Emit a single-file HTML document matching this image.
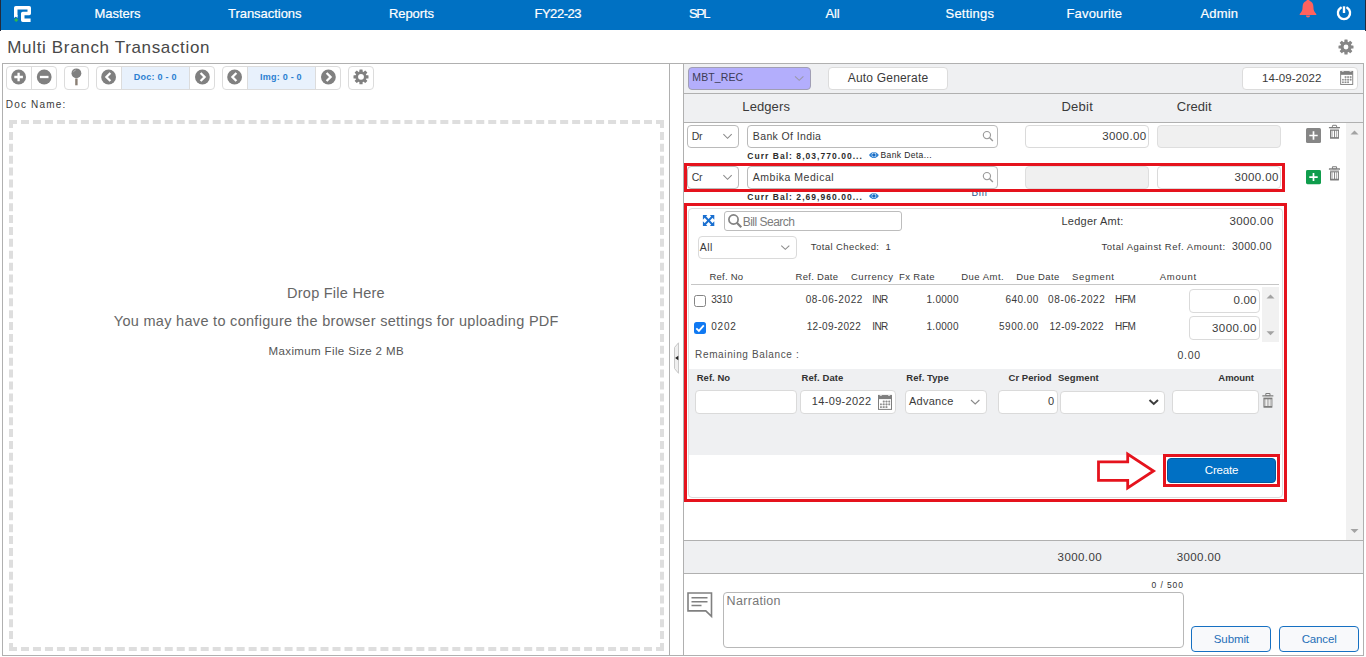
<!DOCTYPE html>
<html><head><meta charset="utf-8"><title>Multi Branch Transaction</title>
<style>
html,body{margin:0;padding:0;background:#fff;}
body{width:1366px;height:657px;position:relative;overflow:hidden;font-family:"Liberation Sans",sans-serif;}
.t{position:absolute;white-space:nowrap;font-family:"Liberation Sans",sans-serif;}
.b{position:absolute;box-sizing:border-box;}
.inp{position:absolute;box-sizing:border-box;background:#fff;border:1px solid #d4d4d4;border-radius:4px;}
</style></head><body>
<div class="b" style="left:0px;top:0px;width:1366px;height:30px;background:#0071c3;"></div>
<div class="b" style="left:0px;top:0px;width:1px;height:31px;background:#222a3c;"></div>
<div class="b" style="left:1365px;top:0px;width:1px;height:31px;background:#222a3c;"></div>
<svg class="b" style="left:12px;top:4px;overflow:visible;" width="22" height="20"><g transform="translate(0.000 0.000) scale(1.0000 1.0000) translate(-12.000 -4.000)"><path d="M15.75 16.5V7.75H29.25V13.500H22.75V20.25H30.6" fill="none" stroke="#fff" stroke-width="3.5" stroke-linejoin="round"/><path d="M14 15v3l1.75-1.4L17.5 18v-3z" fill="#fff"/><path d="M16.2 17.9l2.1 2.1-2.1 2.1-2.1-2.1z" fill="#2fb84e"/></g></svg>
<div class="t" style="left:94.60px;top:7px;font-size:13px;line-height:13px;color:#fff;letter-spacing:-0.069px;-webkit-text-stroke:.2px #fff;">Masters</div>
<div class="t" style="left:228.00px;top:7px;font-size:13px;line-height:13px;color:#fff;letter-spacing:-0.034px;-webkit-text-stroke:.2px #fff;">Transactions</div>
<div class="t" style="left:389.00px;top:7px;font-size:13px;line-height:13px;color:#fff;letter-spacing:-0.083px;-webkit-text-stroke:.2px #fff;">Reports</div>
<div class="t" style="left:534.40px;top:7px;font-size:13px;line-height:13px;color:#fff;letter-spacing:-0.442px;-webkit-text-stroke:.2px #fff;">FY22-23</div>
<div class="t" style="left:689.00px;top:7px;font-size:13px;line-height:13px;color:#fff;letter-spacing:-1.535px;-webkit-text-stroke:.2px #fff;">SPL</div>
<div class="t" style="left:825.50px;top:7px;font-size:13px;line-height:13px;color:#fff;letter-spacing:-0.215px;-webkit-text-stroke:.2px #fff;">All</div>
<div class="t" style="left:945.50px;top:7px;font-size:13px;line-height:13px;color:#fff;letter-spacing:0.215px;-webkit-text-stroke:.2px #fff;">Settings</div>
<div class="t" style="left:1066.50px;top:7px;font-size:13px;line-height:13px;color:#fff;letter-spacing:0.161px;-webkit-text-stroke:.2px #fff;">Favourite</div>
<div class="t" style="left:1200.50px;top:7px;font-size:13px;line-height:13px;color:#fff;letter-spacing:0.161px;-webkit-text-stroke:.2px #fff;">Admin</div>
<svg class="b" style="left:1298px;top:0px;overflow:visible;" width="20" height="19"><g transform="translate(0.000 0.000) scale(1.0000 1.0000) translate(-0.000 -0.000)"><path d="M10 -1.2c-.9 0-1.4.6-1.4 1.4v.6C5.8 1.6 4.6 4 4.6 6.8c0 3.6-1 5.4-2.9 7.2v1h16.6v-1c-1.9-1.8-2.9-3.600-2.900-7.200 0-2.800-1.200-5.200-4-6v-.6c0-.8-.5-1.400-1.400-1.400z" fill="#ff625e"/><path d="M7.900 15.500a2.100 2.100 0 0 0 4.200 0z" fill="#ff625e"/></g></svg>
<svg class="b" style="left:1335px;top:4px;overflow:visible;" width="18" height="18"><g transform="translate(0.000 0.000) scale(1.0000 1.0000) translate(-0.000 -0.000)"><path d="M5.800 3.800A6.100 6.100 0 1 0 12.200 3.800" fill="none" stroke="#fff" stroke-width="2.300" stroke-linecap="round"/><path d="M9 2.300V9" stroke="#fff" stroke-width="2.400" stroke-linecap="butt"/></g></svg>
<div class="t" style="left:7.30px;top:39px;font-size:17px;line-height:17px;color:#484848;letter-spacing:0.657px;">Multi Branch Transaction</div>
<svg class="b" style="left:1338px;top:39px;overflow:visible;" width="16" height="16"><g transform="translate(0.500 0.500) scale(1.0135 1.0000) translate(-0.000 -0.000)"><g transform="translate(7.400 7.500)" fill="#868686"><path fill-rule="evenodd" d="M0 -5.500A5.500 5.500 0 1 0 0 5.500A5.500 5.500 0 1 0 0 -5.500zM0 -2.4A2.4 2.4 0 1 1 0 2.4A2.4 2.4 0 1 1 0 -2.4z"/><rect x="-1.600" y="-7.400" width="3.200" height="3.400" rx=".5" transform="rotate(0)"/><rect x="-1.600" y="-7.400" width="3.200" height="3.400" rx=".5" transform="rotate(45)"/><rect x="-1.600" y="-7.400" width="3.200" height="3.400" rx=".5" transform="rotate(90)"/><rect x="-1.600" y="-7.400" width="3.200" height="3.400" rx=".5" transform="rotate(135)"/><rect x="-1.600" y="-7.400" width="3.200" height="3.400" rx=".5" transform="rotate(180)"/><rect x="-1.600" y="-7.400" width="3.200" height="3.400" rx=".5" transform="rotate(225)"/><rect x="-1.600" y="-7.400" width="3.200" height="3.400" rx=".5" transform="rotate(270)"/><rect x="-1.600" y="-7.400" width="3.200" height="3.400" rx=".5" transform="rotate(315)"/></g></g></svg>
<div class="b" style="left:2px;top:63px;width:1362px;height:1px;background:#b0b0b0;"></div>
<div class="b" style="left:2px;top:655px;width:1362px;height:1px;background:#b0b0b0;"></div>
<div class="b" style="left:2px;top:63px;width:1px;height:593px;background:#b0b0b0;"></div>
<div class="b" style="left:669px;top:63px;width:1px;height:593px;background:#b0b0b0;"></div>
<div class="b" style="left:683px;top:63px;width:1px;height:593px;background:#b0b0b0;"></div>
<div class="b" style="left:1363px;top:63px;width:1px;height:593px;background:#b0b0b0;"></div>
<div class="b" style="left:6px;top:66px;width:51px;height:24px;background:#fff;border:1px solid #dcdcdc;border-radius:4px;"></div>
<div class="b" style="left:31px;top:66px;width:1px;height:24px;background:#dcdcdc;"></div>
<div class="b" style="left:64px;top:66px;width:25px;height:24px;background:#fff;border:1px solid #dcdcdc;border-radius:4px;"></div>
<div class="b" style="left:96px;top:66px;width:119px;height:24px;background:#fff;border:1px solid #dcdcdc;border-radius:4px;"></div>
<div class="b" style="left:121px;top:67px;width:69px;height:22px;background:#e8f1fc;border-left:1px solid #dcdcdc;border-right:1px solid #dcdcdc;"></div>
<div class="b" style="left:222px;top:66px;width:119px;height:24px;background:#fff;border:1px solid #dcdcdc;border-radius:4px;"></div>
<div class="b" style="left:247px;top:67px;width:69px;height:22px;background:#e8f1fc;border-left:1px solid #dcdcdc;border-right:1px solid #dcdcdc;"></div>
<div class="b" style="left:348px;top:66px;width:26px;height:24px;background:#fff;border:1px solid #dcdcdc;border-radius:4px;"></div>
<svg class="b" style="left:10px;top:69px;overflow:visible;" width="17" height="16"><g transform="translate(0.600 0.000) scale(1.0000 1.0000) translate(8.000 8.000)"><circle r="7.400" fill="#808080"/><path d="M-4.300 0H4.300M0 -4.300V4.300" stroke="#fff" stroke-width="2.300"/></g></svg>
<svg class="b" style="left:36px;top:69px;overflow:visible;" width="17" height="16"><g transform="translate(0.200 0.000) scale(1.0000 1.0000) translate(8.000 8.000)"><circle r="7.400" fill="#808080"/><path d="M-4.300 0H4.300" stroke="#fff" stroke-width="2.300"/></g></svg>
<svg class="b" style="left:100px;top:69px;overflow:visible;" width="17" height="16"><g transform="translate(0.600 0.000) scale(1.0000 1.0000) translate(8.000 8.000)"><circle r="7.400" fill="#808080"/><path d="M1.800 -4L-2.200 0L1.800 4" fill="none" stroke="#fff" stroke-width="2.300"/></g></svg>
<svg class="b" style="left:194px;top:69px;overflow:visible;" width="17" height="16"><g transform="translate(0.400 0.000) scale(1.0000 1.0000) translate(8.000 8.000)"><circle r="7.400" fill="#808080"/><path d="M-1.800 -4L2.200 0L-1.800 4" fill="none" stroke="#fff" stroke-width="2.300"/></g></svg>
<svg class="b" style="left:226px;top:69px;overflow:visible;" width="17" height="16"><g transform="translate(0.600 0.000) scale(1.0000 1.0000) translate(8.000 8.000)"><circle r="7.400" fill="#808080"/><path d="M1.800 -4L-2.200 0L1.800 4" fill="none" stroke="#fff" stroke-width="2.300"/></g></svg>
<svg class="b" style="left:320px;top:69px;overflow:visible;" width="17" height="16"><g transform="translate(0.400 0.000) scale(1.0000 1.0000) translate(8.000 8.000)"><circle r="7.400" fill="#808080"/><path d="M-1.800 -4L2.200 0L-1.800 4" fill="none" stroke="#fff" stroke-width="2.300"/></g></svg>
<svg class="b" style="left:70px;top:67px;overflow:visible;" width="13" height="20"><g transform="translate(0.000 0.000) scale(1.0000 1.0000) translate(-0.000 -0.000)"><rect x="5.200" y="11.500" width="2.400" height="6.800" fill="#8a7f74"/><circle cx="6.400" cy="6.300" r="4.900" fill="#808080"/><path d="M3.400 5.200a3.200 3.200 0 0 1 2.500-2.300" fill="none" stroke="#b8b8b8" stroke-width=".8"/></g></svg>
<div class="t" style="left:133.80px;top:73px;font-size:9px;line-height:9px;color:#2b7fd1;letter-spacing:0.256px;font-weight:700;">Doc: 0 - 0</div>
<div class="t" style="left:260.00px;top:73px;font-size:9px;line-height:9px;color:#2b7fd1;letter-spacing:0.232px;font-weight:700;">Img: 0 - 0</div>
<svg class="b" style="left:353px;top:69px;overflow:visible;" width="16" height="16"><g transform="translate(0.500 0.300) scale(1.0135 1.0000) translate(-0.000 -0.000)"><g transform="translate(7.400 7.500)" fill="#808080"><path fill-rule="evenodd" d="M0 -5.500A5.500 5.500 0 1 0 0 5.500A5.500 5.500 0 1 0 0 -5.500zM0 -2.9A2.9 2.9 0 1 1 0 2.9A2.9 2.9 0 1 1 0 -2.9z"/><rect x="-1.600" y="-7.400" width="3.200" height="3.400" rx=".5" transform="rotate(0)"/><rect x="-1.600" y="-7.400" width="3.200" height="3.400" rx=".5" transform="rotate(45)"/><rect x="-1.600" y="-7.400" width="3.200" height="3.400" rx=".5" transform="rotate(90)"/><rect x="-1.600" y="-7.400" width="3.200" height="3.400" rx=".5" transform="rotate(135)"/><rect x="-1.600" y="-7.400" width="3.200" height="3.400" rx=".5" transform="rotate(180)"/><rect x="-1.600" y="-7.400" width="3.200" height="3.400" rx=".5" transform="rotate(225)"/><rect x="-1.600" y="-7.400" width="3.200" height="3.400" rx=".5" transform="rotate(270)"/><rect x="-1.600" y="-7.400" width="3.200" height="3.400" rx=".5" transform="rotate(315)"/></g></g></svg>
<div class="t" style="left:5.80px;top:100px;font-size:10px;line-height:10px;color:#3a3a3a;letter-spacing:1.175px;">Doc Name:</div>
<div class="b" style="left:9px;top:120px;width:655px;height:531px;border:4px dashed #dedede;"></div>
<div class="t" style="left:287.00px;top:286px;font-size:14.5px;line-height:14.5px;color:#666;letter-spacing:0.258px;">Drop File Here</div>
<div class="t" style="left:113.80px;top:314px;font-size:14.5px;line-height:14.5px;color:#666;letter-spacing:0.299px;">You may have to configure the browser settings for uploading PDF</div>
<div class="t" style="left:268.60px;top:346px;font-size:11.5px;line-height:11.5px;color:#555;letter-spacing:0.372px;">Maximum File Size 2 MB</div>
<svg class="b" style="left:673px;top:341px;overflow:visible;" width="8" height="34"><g transform="translate(0.000 0.000) scale(1.0000 1.0000) translate(-0.000 -0.000)"><path d="M5.500 1.800V32.300L1.500 27.500V6.500z" fill="#efefef" stroke="#c8c8c8" stroke-width="1"/><path d="M5.300 14.800v4.400L2.100 17z" fill="#222"/></g></svg>
<div class="b" style="left:684px;top:64px;width:679px;height:29px;background:#eff0f2;"></div>
<div class="b" style="left:684px;top:93px;width:679px;height:1px;background:#b0b0b0;"></div>
<div class="b" style="left:684px;top:94px;width:679px;height:28px;background:#eff0f2;"></div>
<div class="b" style="left:684px;top:122px;width:679px;height:1px;background:#b0b0b0;"></div>
<div class="b" style="left:688px;top:67px;width:123px;height:23px;background:#b3aefc;border:1px solid #a09eb4;border-radius:4px;"></div>
<div class="t" style="left:692.30px;top:72px;font-size:10.5px;line-height:10.5px;color:#3b3b55;letter-spacing:0.102px;">MBT_REC</div>
<svg class="b" style="left:794px;top:75px;overflow:visible;" width="10" height="7"><g transform="translate(0.500 0.800) scale(1.0000 1.0000) translate(-0.000 -0.000)"><path d="M.5 .5L4.700 4.500L8.900 .5" fill="none" stroke="#9a98aa" stroke-width="1.100"/></g></svg>
<div class="b" style="left:828px;top:67px;width:120px;height:23px;background:#fff;border:1px solid #dcdcdc;border-radius:4px;"></div>
<div class="t" style="left:847.80px;top:72px;font-size:12px;line-height:12px;color:#3a3a3a;letter-spacing:0.187px;">Auto Generate</div>
<div class="b" style="left:1242px;top:67px;width:116px;height:23px;background:#fff;border:1px solid #dcdcdc;border-radius:4px;"></div>
<div class="t" style="left:1262.00px;top:73px;font-size:11.5px;line-height:11.5px;color:#3a3a3a;letter-spacing:0.053px;">14-09-2022</div>
<svg class="b" style="left:1340px;top:70px;overflow:visible;" width="14" height="15"><g transform="translate(0.200 0.900) scale(0.9286 0.9333) translate(-0.000 -0.000)"><rect x=".5" y=".5" width="13" height="14" fill="#fff" stroke="#7e7e7e" stroke-width="1"/><rect x=".5" y=".5" width="13" height="3.700" fill="#7e7e7e"/><rect x="1.800" y="0" width="2" height=".9" fill="#e9e9e9"/><rect x="10.100" y="0" width="2" height=".9" fill="#e9e9e9"/><path d="M5.700 5.800V10.400M8.500 5.800V13M11.300 5.800V10.400M2.900 9.450H12M2.900 12.200H9.400M4.800 6.600H12" stroke="#d0d0d0" stroke-width=".9" fill="none"/><g fill="#8c8c8c"><rect x="4.85" y="5.75" width="1.700" height="1.700"/><rect x="7.65" y="5.75" width="1.700" height="1.700"/><rect x="10.45" y="5.75" width="1.700" height="1.700"/><rect x="2.05" y="8.60" width="1.700" height="1.700"/><rect x="4.85" y="8.60" width="1.700" height="1.700"/><rect x="7.65" y="8.60" width="1.700" height="1.700"/><rect x="10.45" y="8.60" width="1.700" height="1.700"/><rect x="2.05" y="11.35" width="1.700" height="1.700"/><rect x="4.85" y="11.35" width="1.700" height="1.700"/><rect x="7.65" y="11.35" width="1.700" height="1.700"/></g></g></svg>
<div class="t" style="left:742.30px;top:100px;font-size:13px;line-height:13px;color:#3a3a3a;letter-spacing:0.101px;">Ledgers</div>
<div class="t" style="left:1061.40px;top:100px;font-size:13px;line-height:13px;color:#3a3a3a;letter-spacing:0.261px;">Debit</div>
<div class="t" style="left:1176.70px;top:100px;font-size:13px;line-height:13px;color:#3a3a3a;letter-spacing:0.058px;">Credit</div>
<div class="b" style="left:1346px;top:123px;width:17px;height:417px;background:#f1f1f1;"></div>
<svg class="b" style="left:1350px;top:130px;overflow:visible;" width="9" height="5"><g transform="translate(0.500 0.000) scale(1.0000 1.0000) translate(-0.000 -0.000)"><path d="M0 4.500L4 .5L8 4.500z" fill="#a3a3a3"/></g></svg>
<svg class="b" style="left:1350px;top:528px;overflow:visible;" width="9" height="6"><g transform="translate(0.500 0.500) scale(1.0000 1.0000) translate(-0.000 -0.000)"><path d="M0 .5L4 4.500L8 .5z" fill="#a3a3a3"/></g></svg>
<div class="b" style="left:687px;top:125px;width:52px;height:23px;background:#fff;border:1px solid #bababa;border-radius:4px;"></div>
<div class="t" style="left:691.80px;top:131px;font-size:10.5px;line-height:10.5px;color:#3a3a3a;letter-spacing:-0.277px;">Dr</div>
<svg class="b" style="left:722px;top:133px;overflow:visible;" width="11" height="7"><g transform="translate(0.900 0.700) scale(0.9894 1.0185) translate(-0.000 -0.000)"><path d="M.5 .5L4.700 4.500L8.900 .5" fill="none" stroke="#8a8a8a" stroke-width="1.100"/></g></svg>
<div class="b" style="left:747px;top:125px;width:251px;height:23px;background:#fff;border:1px solid #bababa;border-radius:4px;"></div>
<div class="t" style="left:752.80px;top:131px;font-size:10.5px;line-height:10.5px;color:#3a3a3a;letter-spacing:0.376px;">Bank Of India</div>
<svg class="b" style="left:982px;top:130px;overflow:visible;" width="12" height="12"><g transform="translate(0.600 0.800) scale(1.0286 1.0286) translate(-0.000 -0.000)"><circle cx="4.200" cy="4.200" r="3.500" fill="none" stroke="#9a9a9a" stroke-width="1.100"/><path d="M6.800 6.800L10 10" stroke="#9a9a9a" stroke-width="1.400"/></g></svg>
<div class="b" style="left:1025px;top:125px;width:124px;height:23px;background:#fff;border:1px solid #dadada;border-radius:4px;"></div>
<div class="t" style="left:1102.20px;top:131px;font-size:11.5px;line-height:11.5px;color:#3a3a3a;letter-spacing:0.405px;">3000.00</div>
<div class="b" style="left:1157px;top:125px;width:124px;height:23px;background:#f0f0f0;border:1px solid #dedede;border-radius:4px;"></div>
<svg class="b" style="left:1306px;top:128px;overflow:visible;" width="15" height="15"><g transform="translate(0.000 0.000) scale(1.0000 1.0000) translate(-0.000 -0.000)"><rect width="15" height="15" rx="1.500" fill="#868686"/><path d="M7.500 3.300v8.400M3.300 7.500h8.400" stroke="#fff" stroke-width="1.700"/></g></svg>
<svg class="b" style="left:1328px;top:124px;overflow:visible;" width="13" height="15"><g transform="translate(0.900 0.900) scale(1.0000 1.0000) translate(-0.000 -0.000)"><rect x="3.500" y=".4" width="4.200" height="2.200" rx=".6" fill="none" stroke="#7d7d7d" stroke-width="1"/><rect x="0" y="2" width="11.100" height="1.350" rx=".3" fill="#7d7d7d"/><rect x="1.100" y="3.350" width="9" height="1.500" fill="#c6c6c6"/><rect x="1.100" y="4.800" width="9" height="9.100" rx=".4" fill="#7d7d7d"/><rect x="2.150" y="5.900" width="1.700" height="6.300" fill="#cfcfcf"/><rect x="3.850" y="5.900" width="1.350" height="6.300" fill="#fff"/><rect x="6.150" y="5.900" width="1.350" height="6.300" fill="#fff"/><rect x="8.050" y="5.900" width="1.150" height="6.300" fill="#f0f0f0"/></g></svg>
<div class="t" style="left:747.30px;top:152px;font-size:8.5px;line-height:8.5px;color:#2c2c2c;letter-spacing:1.035px;font-weight:700;">Curr Bal: 8,03,770.00...</div>
<svg class="b" style="left:868px;top:151px;overflow:visible;" width="11" height="8"><g transform="translate(0.900 0.800) scale(1.0000 1.0000) translate(-0.000 -0.000)"><path d="M.1 3.150C1.500 1 3.200 .1 5 .1s3.500 .9 4.900 3.050C8.500 5.300 6.800 6.200 5 6.200S1.500 5.300 .1 3.150z" fill="#2a7fd2"/><circle cx="5" cy="3.150" r="2.350" fill="#e8f1fb"/><circle cx="5" cy="3.150" r="1.750" fill="#1468c2"/></g></svg>
<div class="t" style="left:880.50px;top:151px;font-size:8.5px;line-height:8.5px;color:#262626;letter-spacing:0.383px;">Bank Deta...</div>
<div class="b" style="left:687px;top:166px;width:52px;height:23px;background:#fff;border:1px solid #bababa;border-radius:4px;"></div>
<div class="t" style="left:691.80px;top:172px;font-size:10.5px;line-height:10.5px;color:#3a3a3a;letter-spacing:-0.277px;">Cr</div>
<svg class="b" style="left:722px;top:174px;overflow:visible;" width="11" height="7"><g transform="translate(0.900 0.700) scale(0.9894 1.0185) translate(-0.000 -0.000)"><path d="M.5 .5L4.700 4.500L8.900 .5" fill="none" stroke="#8a8a8a" stroke-width="1.100"/></g></svg>
<div class="b" style="left:747px;top:166px;width:251px;height:23px;background:#fff;border:1px solid #bababa;border-radius:4px;"></div>
<div class="t" style="left:752.80px;top:172px;font-size:10.5px;line-height:10.5px;color:#3a3a3a;letter-spacing:0.513px;">Ambika Medical</div>
<svg class="b" style="left:982px;top:171px;overflow:visible;" width="12" height="12"><g transform="translate(0.600 0.800) scale(1.0286 1.0286) translate(-0.000 -0.000)"><circle cx="4.200" cy="4.200" r="3.500" fill="none" stroke="#9a9a9a" stroke-width="1.100"/><path d="M6.800 6.800L10 10" stroke="#9a9a9a" stroke-width="1.400"/></g></svg>
<div class="b" style="left:1025px;top:166px;width:124px;height:23px;background:#f0f0f0;border:1px solid #dedede;border-radius:4px;"></div>
<div class="b" style="left:1157px;top:166px;width:124px;height:23px;background:#fff;border:1px solid #dadada;border-radius:4px;"></div>
<div class="t" style="left:1234.40px;top:172px;font-size:11.5px;line-height:11.5px;color:#3a3a3a;letter-spacing:0.405px;">3000.00</div>
<svg class="b" style="left:1306px;top:170px;overflow:visible;" width="15" height="15"><g transform="translate(0.000 0.000) scale(1.0000 0.9467) translate(-0.000 -0.000)"><rect width="15" height="15" rx="1.500" fill="#0f9d4c"/><path d="M7.500 3.300v8.400M3.300 7.500h8.400" stroke="#fff" stroke-width="1.700"/></g></svg>
<svg class="b" style="left:1328px;top:166px;overflow:visible;" width="13" height="15"><g transform="translate(0.900 0.300) scale(1.0000 1.0216) translate(-0.000 -0.000)"><rect x="3.500" y=".4" width="4.200" height="2.200" rx=".6" fill="none" stroke="#7d7d7d" stroke-width="1"/><rect x="0" y="2" width="11.100" height="1.350" rx=".3" fill="#7d7d7d"/><rect x="1.100" y="3.350" width="9" height="1.500" fill="#c6c6c6"/><rect x="1.100" y="4.800" width="9" height="9.100" rx=".4" fill="#7d7d7d"/><rect x="2.150" y="5.900" width="1.700" height="6.300" fill="#cfcfcf"/><rect x="3.850" y="5.900" width="1.350" height="6.300" fill="#fff"/><rect x="6.150" y="5.900" width="1.350" height="6.300" fill="#fff"/><rect x="8.050" y="5.900" width="1.150" height="6.300" fill="#f0f0f0"/></g></svg>
<div class="t" style="left:747.30px;top:193px;font-size:8.5px;line-height:8.5px;color:#2c2c2c;letter-spacing:1.035px;font-weight:700;">Curr Bal: 2,69,960.00...</div>
<svg class="b" style="left:868px;top:192px;overflow:visible;" width="11" height="8"><g transform="translate(0.900 0.800) scale(1.0000 1.0000) translate(-0.000 -0.000)"><path d="M.1 3.150C1.500 1 3.200 .1 5 .1s3.500 .9 4.900 3.050C8.500 5.300 6.800 6.200 5 6.200S1.500 5.300 .1 3.150z" fill="#2a7fd2"/><circle cx="5" cy="3.150" r="2.350" fill="#e8f1fb"/><circle cx="5" cy="3.150" r="1.750" fill="#1468c2"/></g></svg>
<div class="b" style="left:968px;top:192px;width:24px;height:5px;overflow:hidden;"><div class="t" style="left:3.500px;top:-4px;font-size:10px;line-height:10px;color:#34548a;letter-spacing:.7px;">Bill</div></div>
<div class="b" style="left:684px;top:163px;width:601px;height:29px;border:3px solid #e5131d;"></div>
<div class="b" style="left:688px;top:208px;width:595px;height:290px;background:#fff;border:1px solid #dcdcdc;border-radius:4px;"></div>
<svg class="b" style="left:702px;top:214px;overflow:visible;" width="13" height="13"><g transform="translate(0.900 0.900) scale(0.9500 1.0091) translate(-0.000 -0.000)"><path d="M2 1.500L10 9.500M10 1.500L2 9.500" stroke="#1a6fd0" stroke-width="2.100"/><path d="M0 0h4.700L0 4.700zM12 0H7.300L12 4.700zM0 11h4.700L0 6.300zM12 11H7.300L12 6.300z" fill="#1a6fd0"/></g></svg>
<div class="b" style="left:724px;top:211px;width:178px;height:20px;background:#fff;border:1px solid #bdbdbd;border-radius:3px;"></div>
<svg class="b" style="left:728px;top:214px;overflow:visible;" width="14" height="14"><g transform="translate(0.000 0.000) scale(1.0000 1.0000) translate(-0.000 -0.000)"><circle cx="5.500" cy="5.500" r="4.600" fill="none" stroke="#828282" stroke-width="1.700"/><path d="M8.800 8.800L13.300 13.300" stroke="#828282" stroke-width="2.200"/></g></svg>
<div class="t" style="left:742.70px;top:216px;font-size:12px;line-height:12px;color:#7c7c7c;letter-spacing:-0.506px;">Bill Search</div>
<div class="t" style="left:1061.40px;top:216px;font-size:11px;line-height:11px;color:#3a3a3a;letter-spacing:0.271px;">Ledger Amt:</div>
<div class="t" style="left:1229.40px;top:216px;font-size:11.5px;line-height:11.5px;color:#3a3a3a;letter-spacing:0.388px;">3000.00</div>
<div class="b" style="left:698px;top:236px;width:99px;height:23px;background:#fff;border:1px solid #dadada;border-radius:4px;"></div>
<div class="t" style="left:699.80px;top:242px;font-size:10.5px;line-height:10.5px;color:#3a3a3a;letter-spacing:0.373px;">All</div>
<svg class="b" style="left:780px;top:245px;overflow:visible;" width="10" height="6"><g transform="translate(0.800 0.100) scale(0.9574 0.9259) translate(-0.000 -0.000)"><path d="M.5 .5L4.700 4.500L8.900 .5" fill="none" stroke="#8a8a8a" stroke-width="1.100"/></g></svg>
<div class="t" style="left:810.80px;top:242px;font-size:9.5px;line-height:9.5px;color:#3a3a3a;letter-spacing:0.413px;">Total Checked: &nbsp;1</div>
<div class="t" style="left:1101.60px;top:242px;font-size:9.5px;line-height:9.5px;color:#3a3a3a;letter-spacing:0.483px;">Total Against Ref. Amount:</div>
<div class="t" style="left:1231.90px;top:241px;font-size:10.5px;line-height:10.5px;color:#3a3a3a;letter-spacing:0.290px;">3000.00</div>
<div class="t" style="left:709.50px;top:272px;font-size:9.5px;line-height:9.5px;color:#3a3a3a;letter-spacing:0.216px;">Ref. No</div>
<div class="t" style="left:795.60px;top:272px;font-size:9.5px;line-height:9.5px;color:#3a3a3a;letter-spacing:0.283px;">Ref. Date</div>
<div class="t" style="left:851.00px;top:272px;font-size:9.5px;line-height:9.5px;color:#3a3a3a;letter-spacing:0.497px;">Currency</div>
<div class="t" style="left:899.00px;top:272px;font-size:9.5px;line-height:9.5px;color:#3a3a3a;letter-spacing:0.375px;">Fx Rate</div>
<div class="t" style="left:961.20px;top:272px;font-size:9.5px;line-height:9.5px;color:#3a3a3a;letter-spacing:0.487px;">Due Amt.</div>
<div class="t" style="left:1016.30px;top:272px;font-size:9.5px;line-height:9.5px;color:#3a3a3a;letter-spacing:0.409px;">Due Date</div>
<div class="t" style="left:1072.00px;top:272px;font-size:9.5px;line-height:9.5px;color:#3a3a3a;letter-spacing:0.659px;">Segment</div>
<div class="t" style="left:1159.80px;top:272px;font-size:9.5px;line-height:9.5px;color:#3a3a3a;letter-spacing:0.734px;">Amount</div>
<div class="b" style="left:691px;top:284px;width:588px;height:1px;background:#c6c6c6;"></div>
<div class="b" style="left:694px;top:295px;width:12px;height:12px;background:#fff;border:1px solid #858585;border-radius:2.500px;"></div>
<div class="b" style="left:694px;top:322px;width:12px;height:12px;background:#1079f2;border-radius:2.500px;"></div>
<svg class="b" style="left:694px;top:322px;overflow:visible;" width="12" height="12"><g transform="translate(0.000 0.000) scale(1.0000 1.0000) translate(-0.000 -0.000)"><path d="M2.300 6.300L4.900 8.900L9.800 3.300" fill="none" stroke="#fff" stroke-width="1.800"/></g></svg>
<div class="t" style="left:711.20px;top:295px;font-size:10px;line-height:10px;color:#3a3a3a;letter-spacing:-0.250px;">3310</div>
<div class="t" style="left:805.70px;top:295px;font-size:10px;line-height:10px;color:#3a3a3a;letter-spacing:0.617px;">08-06-2022</div>
<div class="t" style="left:872.30px;top:295px;font-size:10px;line-height:10px;color:#3a3a3a;letter-spacing:-0.700px;">INR</div>
<div class="t" style="left:926.50px;top:295px;font-size:10px;line-height:10px;color:#3a3a3a;letter-spacing:0.280px;">1.0000</div>
<div class="t" style="left:1005.40px;top:295px;font-size:10px;line-height:10px;color:#3a3a3a;letter-spacing:0.480px;">640.00</div>
<div class="t" style="left:1048.10px;top:295px;font-size:10px;line-height:10px;color:#3a3a3a;letter-spacing:0.617px;">08-06-2022</div>
<div class="t" style="left:1115.10px;top:295px;font-size:10px;line-height:10px;color:#3a3a3a;letter-spacing:-0.425px;">HFM</div>
<div class="t" style="left:711.20px;top:322px;font-size:10px;line-height:10px;color:#3a3a3a;letter-spacing:0.817px;">0202</div>
<div class="t" style="left:806.70px;top:322px;font-size:10px;line-height:10px;color:#3a3a3a;letter-spacing:0.328px;">12-09-2022</div>
<div class="t" style="left:872.30px;top:322px;font-size:10px;line-height:10px;color:#3a3a3a;letter-spacing:-0.700px;">INR</div>
<div class="t" style="left:926.50px;top:322px;font-size:10px;line-height:10px;color:#3a3a3a;letter-spacing:0.280px;">1.0000</div>
<div class="t" style="left:998.90px;top:322px;font-size:10px;line-height:10px;color:#3a3a3a;letter-spacing:0.558px;">5900.00</div>
<div class="t" style="left:1049.40px;top:322px;font-size:10px;line-height:10px;color:#3a3a3a;letter-spacing:0.328px;">12-09-2022</div>
<div class="t" style="left:1115.10px;top:322px;font-size:10px;line-height:10px;color:#3a3a3a;letter-spacing:-0.425px;">HFM</div>
<div class="b" style="left:1189px;top:289px;width:71px;height:24px;background:#fff;border:1px solid #dadada;border-radius:4px;"></div>
<div class="t" style="left:1233.60px;top:295px;font-size:11.5px;line-height:11.5px;color:#3a3a3a;letter-spacing:0.144px;">0.00</div>
<div class="b" style="left:1189px;top:316px;width:71px;height:24px;background:#fff;border:1px solid #dadada;border-radius:4px;"></div>
<div class="t" style="left:1212.00px;top:323px;font-size:11.5px;line-height:11.5px;color:#3a3a3a;letter-spacing:0.471px;">3000.00</div>
<div class="b" style="left:1262px;top:287px;width:17px;height:55px;background:#f1f1f1;"></div>
<svg class="b" style="left:1266px;top:294px;overflow:visible;" width="9" height="5"><g transform="translate(0.500 0.000) scale(1.0000 1.0000) translate(-0.000 -0.000)"><path d="M0 4.500L4 .5L8 4.500z" fill="#a3a3a3"/></g></svg>
<svg class="b" style="left:1266px;top:330px;overflow:visible;" width="9" height="6"><g transform="translate(0.500 0.700) scale(1.0000 1.0000) translate(-0.000 -0.000)"><path d="M0 .5L4 4.500L8 .5z" fill="#a3a3a3"/></g></svg>
<div class="t" style="left:695.10px;top:350px;font-size:10px;line-height:10px;color:#505050;letter-spacing:0.628px;">Remaining Balance :</div>
<div class="t" style="left:1177.50px;top:350px;font-size:10.5px;line-height:10.5px;color:#3a3a3a;letter-spacing:0.693px;">0.00</div>
<div class="b" style="left:689px;top:369px;width:592px;height:86px;background:#eff0f2;"></div>
<div class="t" style="left:696.70px;top:373px;font-size:9.5px;line-height:9.5px;color:#333;letter-spacing:0.025px;font-weight:700;">Ref. No</div>
<div class="t" style="left:801.50px;top:373px;font-size:9.5px;line-height:9.5px;color:#333;letter-spacing:0.090px;font-weight:700;">Ref. Date</div>
<div class="t" style="left:906.30px;top:373px;font-size:9.5px;line-height:9.5px;color:#333;letter-spacing:0.045px;font-weight:700;">Ref. Type</div>
<div class="t" style="left:1008.50px;top:373px;font-size:9.5px;line-height:9.5px;color:#333;letter-spacing:0.031px;font-weight:700;">Cr Period</div>
<div class="t" style="left:1057.90px;top:373px;font-size:9.5px;line-height:9.5px;color:#333;letter-spacing:0.127px;font-weight:700;">Segment</div>
<div class="t" style="left:1218.30px;top:373px;font-size:9.5px;line-height:9.5px;color:#333;letter-spacing:-0.032px;font-weight:700;">Amount</div>
<div class="b" style="left:695px;top:390px;width:102px;height:24px;background:#fff;border:1px solid #dadada;border-radius:4px;"></div>
<div class="b" style="left:800px;top:390px;width:96px;height:24px;background:#fff;border:1px solid #dadada;border-radius:4px;"></div>
<div class="t" style="left:811.80px;top:396px;font-size:11px;line-height:11px;color:#3a3a3a;letter-spacing:0.337px;">14-09-2022</div>
<svg class="b" style="left:878px;top:394px;overflow:visible;" width="14" height="16"><g transform="translate(0.000 0.900) scale(1.0000 1.0000) translate(-0.000 -0.000)"><rect x=".5" y=".5" width="13" height="14" fill="#fff" stroke="#7e7e7e" stroke-width="1"/><rect x=".5" y=".5" width="13" height="3.700" fill="#7e7e7e"/><rect x="1.800" y="0" width="2" height=".9" fill="#e9e9e9"/><rect x="10.100" y="0" width="2" height=".9" fill="#e9e9e9"/><path d="M5.700 5.800V10.400M8.500 5.800V13M11.300 5.800V10.400M2.900 9.450H12M2.900 12.200H9.400M4.800 6.600H12" stroke="#d0d0d0" stroke-width=".9" fill="none"/><g fill="#8c8c8c"><rect x="4.85" y="5.75" width="1.700" height="1.700"/><rect x="7.65" y="5.75" width="1.700" height="1.700"/><rect x="10.45" y="5.75" width="1.700" height="1.700"/><rect x="2.05" y="8.60" width="1.700" height="1.700"/><rect x="4.85" y="8.60" width="1.700" height="1.700"/><rect x="7.65" y="8.60" width="1.700" height="1.700"/><rect x="10.45" y="8.60" width="1.700" height="1.700"/><rect x="2.05" y="11.35" width="1.700" height="1.700"/><rect x="4.85" y="11.35" width="1.700" height="1.700"/><rect x="7.65" y="11.35" width="1.700" height="1.700"/></g></g></svg>
<div class="b" style="left:905px;top:390px;width:82px;height:24px;background:#fff;border:1px solid #dadada;border-radius:4px;"></div>
<div class="t" style="left:908.90px;top:396px;font-size:11px;line-height:11px;color:#3a3a3a;letter-spacing:0.285px;">Advance</div>
<svg class="b" style="left:970px;top:399px;overflow:visible;" width="10" height="6"><g transform="translate(0.500 0.500) scale(1.0000 1.0000) translate(-0.000 -0.000)"><path d="M.5 .5L4.700 4.500L8.900 .5" fill="none" stroke="#8a8a8a" stroke-width="1.100"/></g></svg>
<div class="b" style="left:998px;top:390px;width:60px;height:24px;background:#fff;border:1px solid #dadada;border-radius:4px;"></div>
<div class="t" style="left:1048.10px;top:396px;font-size:11px;line-height:11px;color:#3a3a3a;">0</div>
<div class="b" style="left:1060px;top:391px;width:105px;height:23px;background:#fff;border:1px solid #dadada;border-radius:4px;"></div>
<svg class="b" style="left:1148px;top:399px;overflow:visible;" width="11" height="7"><g transform="translate(0.500 0.000) scale(1.0000 1.0000) translate(-0.000 -0.000)"><path d="M1 1L5.250 5L9.500 1" fill="none" stroke="#3c3c3c" stroke-width="2"/></g></svg>
<div class="b" style="left:1172px;top:390px;width:87px;height:24px;background:#fff;border:1px solid #dadada;border-radius:4px;"></div>
<svg class="b" style="left:1262px;top:393px;overflow:visible;" width="12" height="15"><g transform="translate(0.300 0.000) scale(1.0000 1.0647) translate(-0.000 -0.000)"><rect x="3.500" y=".4" width="4.200" height="2.200" rx=".6" fill="none" stroke="#7d7d7d" stroke-width="1"/><rect x="0" y="2" width="11.100" height="1.350" rx=".3" fill="#7d7d7d"/><rect x="1.100" y="3.350" width="9" height="1.500" fill="#c6c6c6"/><rect x="1.100" y="4.800" width="9" height="9.100" rx=".4" fill="#7d7d7d"/><rect x="2.150" y="5.900" width="1.700" height="6.300" fill="#cfcfcf"/><rect x="3.850" y="5.900" width="1.350" height="6.300" fill="#fff"/><rect x="6.150" y="5.900" width="1.350" height="6.300" fill="#fff"/><rect x="8.050" y="5.900" width="1.150" height="6.300" fill="#f0f0f0"/></g></svg>
<div class="b" style="left:1167px;top:458px;width:109px;height:25px;background:#0070c4;border:1px solid #005a9e;border-radius:4px;"></div>
<div class="t" style="left:1204.80px;top:465px;font-size:11.5px;line-height:11.5px;color:#fff;letter-spacing:-0.160px;">Create</div>
<div class="b" style="left:1163px;top:454px;width:117px;height:33px;border:3px solid #e5131d;"></div>
<svg class="b" style="left:1095px;top:449px;overflow:visible;" width="64" height="44"><g transform="translate(0.000 0.000) scale(1.0000 1.0000) translate(-0.000 -0.000)"><path d="M3.500 12.800H32.700V5.100L58.500 22L32.700 38.800V31.400H3.500z" fill="#fff" stroke="#e5131d" stroke-width="2.800" stroke-linejoin="miter"/></g></svg>
<div class="b" style="left:684px;top:203px;width:603px;height:299px;border:3px solid #e5131d;"></div>
<div class="b" style="left:684px;top:540px;width:679px;height:1px;background:#b0b0b0;"></div>
<div class="b" style="left:684px;top:541px;width:679px;height:32px;background:#eff0f2;"></div>
<div class="b" style="left:684px;top:573px;width:679px;height:1px;background:#b0b0b0;"></div>
<div class="t" style="left:1057.60px;top:552px;font-size:11.5px;line-height:11.5px;color:#3a3a3a;letter-spacing:0.405px;">3000.00</div>
<div class="t" style="left:1176.70px;top:552px;font-size:11.5px;line-height:11.5px;color:#3a3a3a;letter-spacing:0.405px;">3000.00</div>
<svg class="b" style="left:687px;top:592px;overflow:visible;" width="26" height="26"><g transform="translate(0.000 0.000) scale(1.0000 1.0000) translate(-0.000 -0.000)"><path d="M1 1H24.500V24.400L18.800 18.900H1z" fill="#fff" stroke="#808080" stroke-width="1.600"/><path d="M4.500 5.800H20.500M4.500 9.700H20.500M4.500 13.400H14.500" stroke="#808080" stroke-width="1.500"/></g></svg>
<div class="b" style="left:723px;top:592px;width:461px;height:56px;background:#fff;border:1px solid #b8b8b8;border-radius:4px;"></div>
<div class="t" style="left:726.60px;top:595px;font-size:12.5px;line-height:12.5px;color:#777;letter-spacing:0.320px;">Narration</div>
<div class="t" style="left:1151.50px;top:581px;font-size:8.5px;line-height:8.5px;color:#333;letter-spacing:0.898px;">0 / 500</div>
<div class="b" style="left:1191px;top:626px;width:80px;height:26px;background:#f8f9fb;border:1px solid #1670c2;border-radius:4px;"></div>
<div class="t" style="left:1213.80px;top:634px;font-size:11.5px;line-height:11.5px;color:#1f6fb8;letter-spacing:-0.113px;">Submit</div>
<div class="b" style="left:1279px;top:626px;width:80px;height:26px;background:#f8f9fb;border:1px solid #1670c2;border-radius:4px;"></div>
<div class="t" style="left:1301.70px;top:634px;font-size:11.5px;line-height:11.5px;color:#1f6fb8;letter-spacing:-0.144px;">Cancel</div>
</body></html>
